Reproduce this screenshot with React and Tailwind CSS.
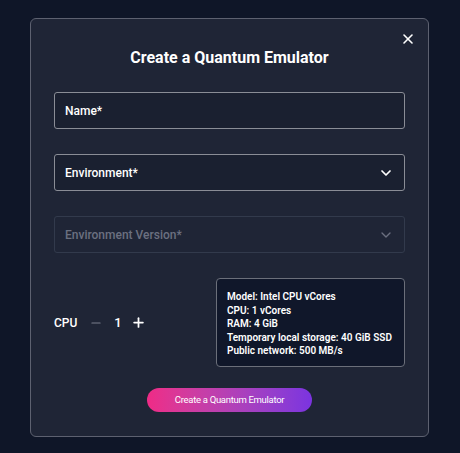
import { X, ChevronDown, Minus, Plus } from 'lucide-react'

function SelectField({ label, disabled }) {
  return (
    <div
      className={
        'flex h-[37px] items-center justify-between rounded-[3px] border px-[10px] ' +
        (disabled ? 'border-[#323a4c]' : 'border-[#8a8d96] bg-[#1a2030]')
      }
    >
      <span className={'text-[12px] font-medium ' + (disabled ? 'text-[#6b7080]' : 'text-white')}>{label}</span>
      <ChevronDown size={16} strokeWidth={disabled ? 2 : 2.6} className={disabled ? 'text-[#6b7080]' : 'text-white'} />
    </div>
  )
}

export default function App() {
  const specs = [
    'Model: Intel CPU vCores',
    'CPU: 1 vCores',
    'RAM: 4 GiB',
    'Temporary local storage: 40 GiB SSD',
    'Public network: 500 MB/s',
  ]

  return (
    <div className="h-[453px] w-[460px] bg-[#0f1628] pt-[18px] pl-[30px]" style={{ fontFamily: 'Roboto, "Liberation Sans", sans-serif' }}>
      <div className="relative h-[419px] w-[399px] rounded-[6px] border border-[#5d6170] bg-[#1f2536] px-[23px] pt-[27px]">
        <button className="absolute right-[12px] top-[12px] text-white">
          <X size={16} strokeWidth={2.4} />
        </button>

        <h1 className="text-center text-[16px] font-bold text-white">Create a Quantum Emulator</h1>

        <div className="mt-[22px] flex flex-col gap-[25px]">
          <div className="flex h-[37px] items-center rounded-[3px] border border-[#8a8d96] bg-[#1a2030] px-[10px]">
            <span className="text-[12px] font-medium text-white">Name*</span>
          </div>
          <SelectField label="Environment*" />
          <SelectField label="Environment Version*" disabled />
        </div>

        <div className="mt-[25px] flex items-center justify-between">
          <div className="flex items-center text-[12px] font-medium text-white">
            <span>CPU</span>
            <Minus size={14} strokeWidth={2} className="ml-[12px] text-[#7a7f8c]" />
            <span className="ml-[11px] text-[13px]">1</span>
            <Plus size={15} strokeWidth={2.8} className="ml-[9px] text-white" />
          </div>
          <div className="flex h-[89px] w-[189px] flex-col justify-center rounded-[4px] border border-[#6b6f7a] bg-[#10172a] pl-[10px] pt-[3px] text-[10px] font-semibold leading-[13.5px] text-white">
            {specs.map((s) => (
              <div key={s}>{s}</div>
            ))}
          </div>
        </div>

        <div className="mt-[21px] flex justify-center">
          <button className="h-[24px] w-[165px] rounded-full bg-gradient-to-r from-[#ef2a86] to-[#7b33e0] text-[9.5px] tracking-[-0.3px] text-white">
            Create a Quantum Emulator
          </button>
        </div>
      </div>
    </div>
  )
}
